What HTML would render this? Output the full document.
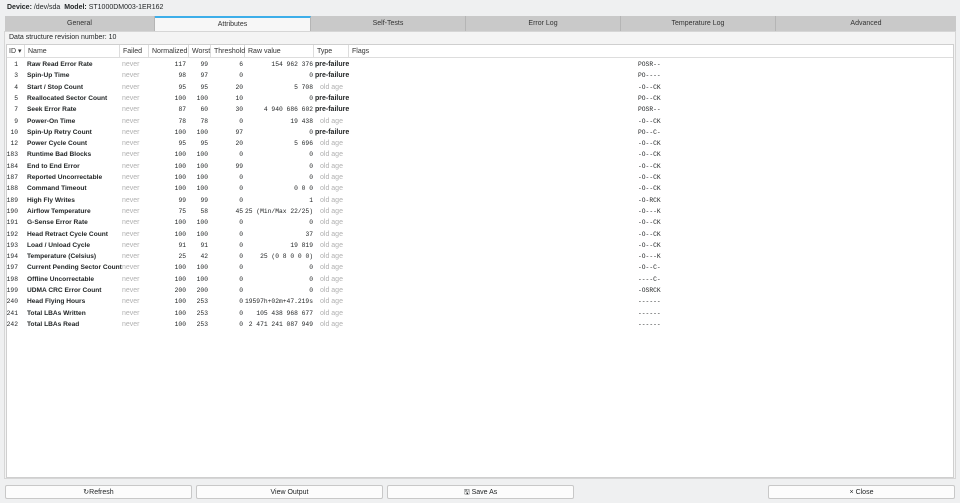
<!DOCTYPE html>
<html><head><meta charset="utf-8"><style>
*{margin:0;padding:0;box-sizing:border-box}
body{width:960px;height:503px;background:#eff0f1;font-family:"Liberation Sans",sans-serif;font-size:7px;color:#232627;position:relative;overflow:hidden}
.abs{position:absolute;white-space:nowrap}
.tab{position:absolute;top:16px;height:15px;line-height:15px;text-align:center;background:#c9c9c9;color:#333;font-size:7px;border-right:1px solid #b5b5b5}
.tab.act{background:#f7f7f7;border-top:2px solid #3daee9;line-height:13px}
#panel{position:absolute;left:4px;top:31px;width:952px;height:448px;background:#f4f4f4;border:1px solid #d6d6d6}
#tbl{position:absolute;left:6px;top:44px;width:948px;height:434px;background:#fff;border:1px solid #cfcfcf}
.hd{position:absolute;top:45px;height:13px;line-height:13px;border-right:1px solid #ddd;padding-left:3px;color:#333}
.r{position:absolute;height:11px;line-height:11px;left:0;width:960px}
.r span{position:absolute;white-space:nowrap}
.m{font-family:"Liberation Mono",monospace;font-size:6.3px}
.b{font-weight:bold}
.n{font-size:6.6px}
.g{color:#b0b0b0}
.btn{position:absolute;top:485px;height:14px;line-height:14px;text-align:center;background:#fcfcfc;border:1px solid #c8c8c8;border-radius:2px;font-size:7px}
</style></head><body>
<div class="abs" style="left:7px;top:4px;font-size:7px"><b>Device:</b> /dev/sda &nbsp;<b>Model:</b> ST1000DM003-1ER162</div>
<div class="tab" style="left:5px;width:150px">General</div>
<div class="tab act" style="left:155px;width:156px">Attributes</div>
<div class="tab" style="left:311px;width:155px">Self-Tests</div>
<div class="tab" style="left:466px;width:155px">Error Log</div>
<div class="tab" style="left:621px;width:155px">Temperature Log</div>
<div class="tab" style="left:776px;width:180px;border-right:none">Advanced</div>
<div id="panel"></div>
<div class="abs" style="left:9px;top:34px">Data structure revision number: 10</div>
<div id="tbl"></div>
<div class="hd" style="left:6px;width:19px">ID ▾</div>
<div class="hd" style="left:25px;width:95px">Name</div>
<div class="hd" style="left:120px;width:29px">Failed</div>
<div class="hd" style="left:149px;width:40px">Normalized</div>
<div class="hd" style="left:189px;width:22px">Worst</div>
<div class="hd" style="left:211px;width:34px">Threshold</div>
<div class="hd" style="left:245px;width:69px">Raw value</div>
<div class="hd" style="left:314px;width:35px">Type</div>
<div class="hd" style="left:349px;width:605px;border-right:none">Flags</div>
<div class="abs" style="left:7px;top:57px;width:946px;border-top:1px solid #ddd"></div>
<div id="rows"></div>
<div class="btn" style="left:5px;width:187px">↻Refresh</div>
<div class="btn" style="left:196px;width:187px">View Output</div>
<div class="btn" style="left:387px;width:187px">🖫 Save As</div>
<div class="btn" style="left:768px;width:187px">× Close</div>
<script>
var d=[
[1,"Raw Read Error Rate",117,99,6,"154 962 376",1,"POSR--"],
[3,"Spin-Up Time",98,97,0,"0",1,"PO----"],
[4,"Start / Stop Count",95,95,20,"5 708",0,"-O--CK"],
[5,"Reallocated Sector Count",100,100,10,"0",1,"PO--CK"],
[7,"Seek Error Rate",87,60,30,"4 940 686 602",1,"POSR--"],
[9,"Power-On Time",78,78,0,"19 438",0,"-O--CK"],
[10,"Spin-Up Retry Count",100,100,97,"0",1,"PO--C-"],
[12,"Power Cycle Count",95,95,20,"5 696",0,"-O--CK"],
[183,"Runtime Bad Blocks",100,100,0,"0",0,"-O--CK"],
[184,"End to End Error",100,100,99,"0",0,"-O--CK"],
[187,"Reported Uncorrectable",100,100,0,"0",0,"-O--CK"],
[188,"Command Timeout",100,100,0,"0 0 0",0,"-O--CK"],
[189,"High Fly Writes",99,99,0,"1",0,"-O-RCK"],
[190,"Airflow Temperature",75,58,45,"25 (Min/Max 22/25)",0,"-O---K"],
[191,"G-Sense Error Rate",100,100,0,"0",0,"-O--CK"],
[192,"Head Retract Cycle Count",100,100,0,"37",0,"-O--CK"],
[193,"Load / Unload Cycle",91,91,0,"19 819",0,"-O--CK"],
[194,"Temperature (Celsius)",25,42,0,"25 (0 8 0 0 0)",0,"-O---K"],
[197,"Current Pending Sector Count",100,100,0,"0",0,"-O--C-"],
[198,"Offline Uncorrectable",100,100,0,"0",0,"----C-"],
[199,"UDMA CRC Error Count",200,200,0,"0",0,"-OSRCK"],
[240,"Head Flying Hours",100,253,0,"19597h+02m+47.219s",0,"------"],
[241,"Total LBAs Written",100,253,0,"105 438 968 677",0,"------"],
[242,"Total LBAs Read",100,253,0,"2 471 241 087 949",0,"------"]];
var h="";
d.forEach(function(r,i){var y=59+i*11.3;
h+='<div class="r" style="top:'+y+'px">'+
'<span class="m" style="right:'+(960-18)+'px">'+r[0]+'</span>'+
'<span class="b n" style="left:27px">'+r[1]+'</span>'+
'<span class="g" style="left:122px">never</span>'+
'<span class="m" style="right:'+(960-186)+'px">'+r[2]+'</span>'+
'<span class="m" style="right:'+(960-208)+'px">'+r[3]+'</span>'+
'<span class="m" style="right:'+(960-243)+'px">'+r[4]+'</span>'+
'<span class="m" style="right:'+(960-313)+'px">'+r[5]+'</span>'+
(r[6]?'<span class="b" style="left:315px">pre-failure</span>':'<span class="g" style="left:320px">old age</span>')+
'<span class="m" style="left:638px">'+r[7]+'</span></div>';});
document.getElementById("rows").innerHTML=h;
</script>
</body></html>
